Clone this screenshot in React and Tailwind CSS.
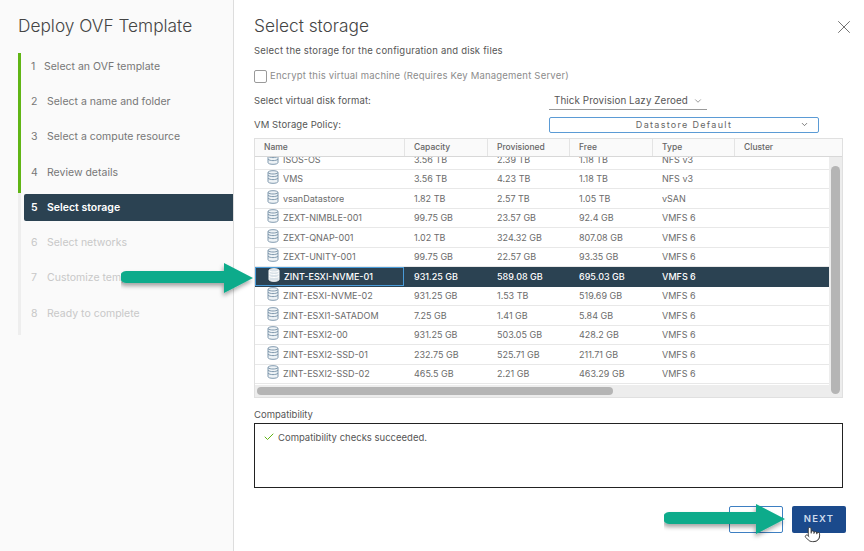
import { Check, ChevronDown, Pointer, X } from 'lucide-react'

const steps = [
  { n: 1, label: 'Select an OVF template', state: 'done' },
  { n: 2, label: 'Select a name and folder', state: 'done' },
  { n: 3, label: 'Select a compute resource', state: 'done' },
  { n: 4, label: 'Review details', state: 'done' },
  { n: 5, label: 'Select storage', state: 'active' },
  { n: 6, label: 'Select networks', state: 'todo' },
  { n: 7, label: 'Customize template', state: 'todo' },
  { n: 8, label: 'Ready to complete', state: 'todo' },
]

const rows = [
  ['ISOS-OS', '3.56 TB', '2.39 TB', '1.18 TB', 'NFS v3'],
  ['VMS', '3.56 TB', '4.23 TB', '1.18 TB', 'NFS v3'],
  ['vsanDatastore', '1.82 TB', '2.57 TB', '1.05 TB', 'vSAN'],
  ['ZEXT-NIMBLE-001', '99.75 GB', '23.57 GB', '92.4 GB', 'VMFS 6'],
  ['ZEXT-QNAP-001', '1.02 TB', '324.32 GB', '807.08 GB', 'VMFS 6'],
  ['ZEXT-UNITY-001', '99.75 GB', '22.57 GB', '93.35 GB', 'VMFS 6'],
  ['ZINT-ESXI-NVME-01', '931.25 GB', '589.08 GB', '695.03 GB', 'VMFS 6'],
  ['ZINT-ESXI-NVME-02', '931.25 GB', '1.53 TB', '519.69 GB', 'VMFS 6'],
  ['ZINT-ESXI1-SATADOM', '7.25 GB', '1.41 GB', '5.84 GB', 'VMFS 6'],
  ['ZINT-ESXI2-00', '931.25 GB', '503.05 GB', '428.2 GB', 'VMFS 6'],
  ['ZINT-ESXI2-SSD-01', '232.75 GB', '525.71 GB', '211.71 GB', 'VMFS 6'],
  ['ZINT-ESXI2-SSD-02', '465.5 GB', '2.21 GB', '463.29 GB', 'VMFS 6'],
]

function DbIcon({ selected }) {
  const stroke = selected ? '#ffffff' : '#7f98ad'
  const fill = selected ? '#d9e2e8' : '#eef3f6'
  return (
    <svg width="12" height="14" viewBox="0 0 12 14" className="mt-[-3px] shrink-0">
      <path d="M1 2.5C1 1.4 3.2.7 6 .7s5 .7 5 1.8v9c0 1.1-2.2 1.8-5 1.8s-5-.7-5-1.8z" fill={fill} stroke={stroke} />
      <path d="M1 5.2c1 1 3 1.4 5 1.4s4-.4 5-1.4M1 8.2c1 1 3 1.4 5 1.4s4-.4 5-1.4M1 2.6c1 1 3 1.4 5 1.4s4-.4 5-1.4" fill="none" stroke={stroke} />
    </svg>
  )
}

// w is the full drawing width, the head is always 29px long
function Arrow({ w, className }) {
  const base = w - 33
  return (
    <svg width={w} height="40" viewBox={`0 0 ${w} 40`} className={className}>
      <defs>
        <filter id={`arrowShadow${w}`} x="-10%" y="-30%" width="120%" height="170%">
          <feDropShadow dx="-1" dy="3" stdDeviation="2" floodColor="#000000" floodOpacity="0.35" />
        </filter>
      </defs>
      <path
        d={`M5 9H${base}V1L${base + 29} 16 ${base} 31V21H5a6 6 0 0 1 0-12z`}
        fill="#0aab8b"
        filter={`url(#arrowShadow${w})`}
      />
    </svg>
  )
}

function StepList() {
  return (
    <div className="relative ml-[18px] mt-[15px] flex h-[282px] flex-col border-l-[3px] border-[#eeeeee]">
      <div className="absolute left-[-3px] top-0 h-[140px] w-[3px] bg-[#60b515]" />
      {steps.map((s) => (
        <div
          key={s.n}
          className={`ml-[3px] mb-[8.3px] flex h-[27px] shrink-0 items-center rounded-l-[2px] pl-[7px] text-[10.5px] first:mt-[5px] ${
            s.state === 'active'
              ? 'bg-[#2b4252] font-semibold text-white'
              : s.state === 'done'
                ? 'text-[#777777]'
                : 'text-[#c8c8c8]'
          }`}
        >
          <span className={s.n === 1 ? 'w-[13px]' : 'w-[16px]'}>{s.n}</span>
          <span>{s.label}</span>
        </div>
      ))}
    </div>
  )
}

function StorageTable() {
  const cols = 'grid grid-cols-[149px_83px_82px_83px_82px_1fr]'
  return (
    <div className="mr-[3px] mt-[5px] h-[260px] overflow-hidden border border-[#e0e0e0] bg-white text-[9px]">
      <div className={`${cols} h-[18px] items-center border-b border-[#d8d8d8] bg-[#fafafa] text-[8.5px] font-medium text-[#666666]`}>
        {['Name', 'Capacity', 'Provisioned', 'Free', 'Type', 'Cluster'].map((h, i) => (
          <div key={h} className={`flex h-full items-center pl-[9px] ${i ? 'border-l border-[#e4e4e4]' : ''}`}>
            {h}
          </div>
        ))}
      </div>
      <div className="flex h-[228px]">
        <div className="min-w-0 flex-1 overflow-hidden">
          <div className="mt-[-7px]">
            {rows.map((r) => {
              const selected = r[0] === 'ZINT-ESXI-NVME-01'
              return (
                <div
                  key={r[0]}
                  className={`${cols} h-[19.5px] items-center border-b ${
                    selected ? 'border-[#2b4252] bg-[#2b4252] font-medium text-white' : 'border-[#e8e8e8] text-[#6b6b6b]'
                  }`}
                >
                  <div className={`flex h-full items-center gap-[4px] pl-[12px] ${selected ? 'border border-[#4a9bd8] pl-[11px]' : ''}`}>
                    <DbIcon selected={selected} />
                    <span className="truncate">{r[0]}</span>
                  </div>
                  {r.slice(1).map((c, i) => (
                    <div key={i} className="pl-[10px]">{c}</div>
                  ))}
                </div>
              )
            })}
          </div>
        </div>
        <div className="w-[13px] bg-[#ededed] px-[2px] pt-[9px]">
          <div className="h-[228px] rounded-full bg-[#b5b5b5]" />
        </div>
      </div>
      <div className="h-[13px] bg-[#ededed] p-[2px]">
        <div className="h-[8px] w-[356px] rounded-full bg-[#b5b5b5]" />
      </div>
    </div>
  )
}

export default function App() {
  return (
    <div
      className="relative flex h-[551px] w-[864px] overflow-hidden bg-white"
      style={{ fontFamily: 'Inter, "Liberation Sans", sans-serif' }}
    >
      <aside className="w-[234px] shrink-0 border-r border-[#dddddd] bg-[#fafafa]">
        <h1 className="pl-[18px] pt-[14px] text-[17.3px] font-light leading-[24px] text-[#444444]">Deploy OVF Template</h1>
        <StepList />
      </aside>

      <main className="relative flex-1 pl-[20px] pr-[18px]">
        <h2 className="pt-[14px] text-[17.3px] font-light leading-[24px] text-[#444444]">Select storage</h2>
        <button className="absolute right-[9px] top-[16px] text-[#555555]">
          <X size={22} strokeWidth={0.9} />
        </button>
        <p className="mt-[6px] text-[9.5px] leading-[14px] tracking-[0.2px] text-[#565656]">Select the storage for the configuration and disk files</p>

        <label className="mt-[11px] flex h-[14px] items-center gap-[3px] text-[9.5px] tracking-[0.2px] text-[#8c8c8c]">
          <span className="h-[13px] w-[13px] rounded-[2px] border border-[#9a9a9a] bg-white" />
          Encrypt this virtual machine (Requires Key Management Server)
        </label>

        <div className="mt-[10px] flex h-[17px] items-center text-[9.5px] tracking-[0.1px] text-[#565656]">
          <span className="w-[295px]">Select virtual disk format:</span>
          <div className="flex h-[17px] w-[158px] items-center justify-between border-b border-[#9a9a9a] pl-[5px] pr-[4px] text-[9.8px]">
            Thick Provision Lazy Zeroed
            <ChevronDown size={10} className="text-[#888888]" />
          </div>
        </div>

        <div className="mt-[7px] flex h-[16px] items-center text-[9.5px] tracking-[0.1px] text-[#565656]">
          <span className="w-[295px]">VM Storage Policy:</span>
          <div className="relative flex h-[16px] w-[270px] items-center justify-center rounded-[2px] border border-[#5b9bd5] text-[9px] tracking-[1.3px] text-[#666666]">
            Datastore Default
            <ChevronDown size={9} className="absolute right-[9px] top-[2px] text-[#555555]" />
          </div>
        </div>

        <StorageTable />

        <p className="mt-[11px] text-[9.5px] leading-[12px] text-[#565656]">Compatibility</p>
        <div className="mr-[3px] mt-[2px] flex h-[65px] items-start border border-[#222222] pl-[8px] pt-[7px] text-[9.5px] text-[#565656]">
          <Check size={12} strokeWidth={2} className="mr-[3px] text-[#60b515]" />
          Compatibility checks succeeded.
        </div>

        <div className="mt-[18px] flex justify-end gap-[9px]">
          <div className="h-[27px] w-[54px] rounded-[2px] border border-[#3d7fc2]" />
          <div className="flex h-[27px] w-[54px] items-center justify-center rounded-[2px] bg-[#1b4a8c] text-[9.5px] font-semibold tracking-[1.2px] text-[#cfdcec]">
            NEXT
          </div>
        </div>
      </main>

      <Arrow w={136} className="absolute left-[121px] top-[262px]" />
      <Arrow w={125} className="absolute left-[664px] top-[503px]" />
      <Pointer size={17} className="absolute left-[804px] top-[526px] fill-white text-[#333333]" strokeWidth={1.3} />
    </div>
  )
}
